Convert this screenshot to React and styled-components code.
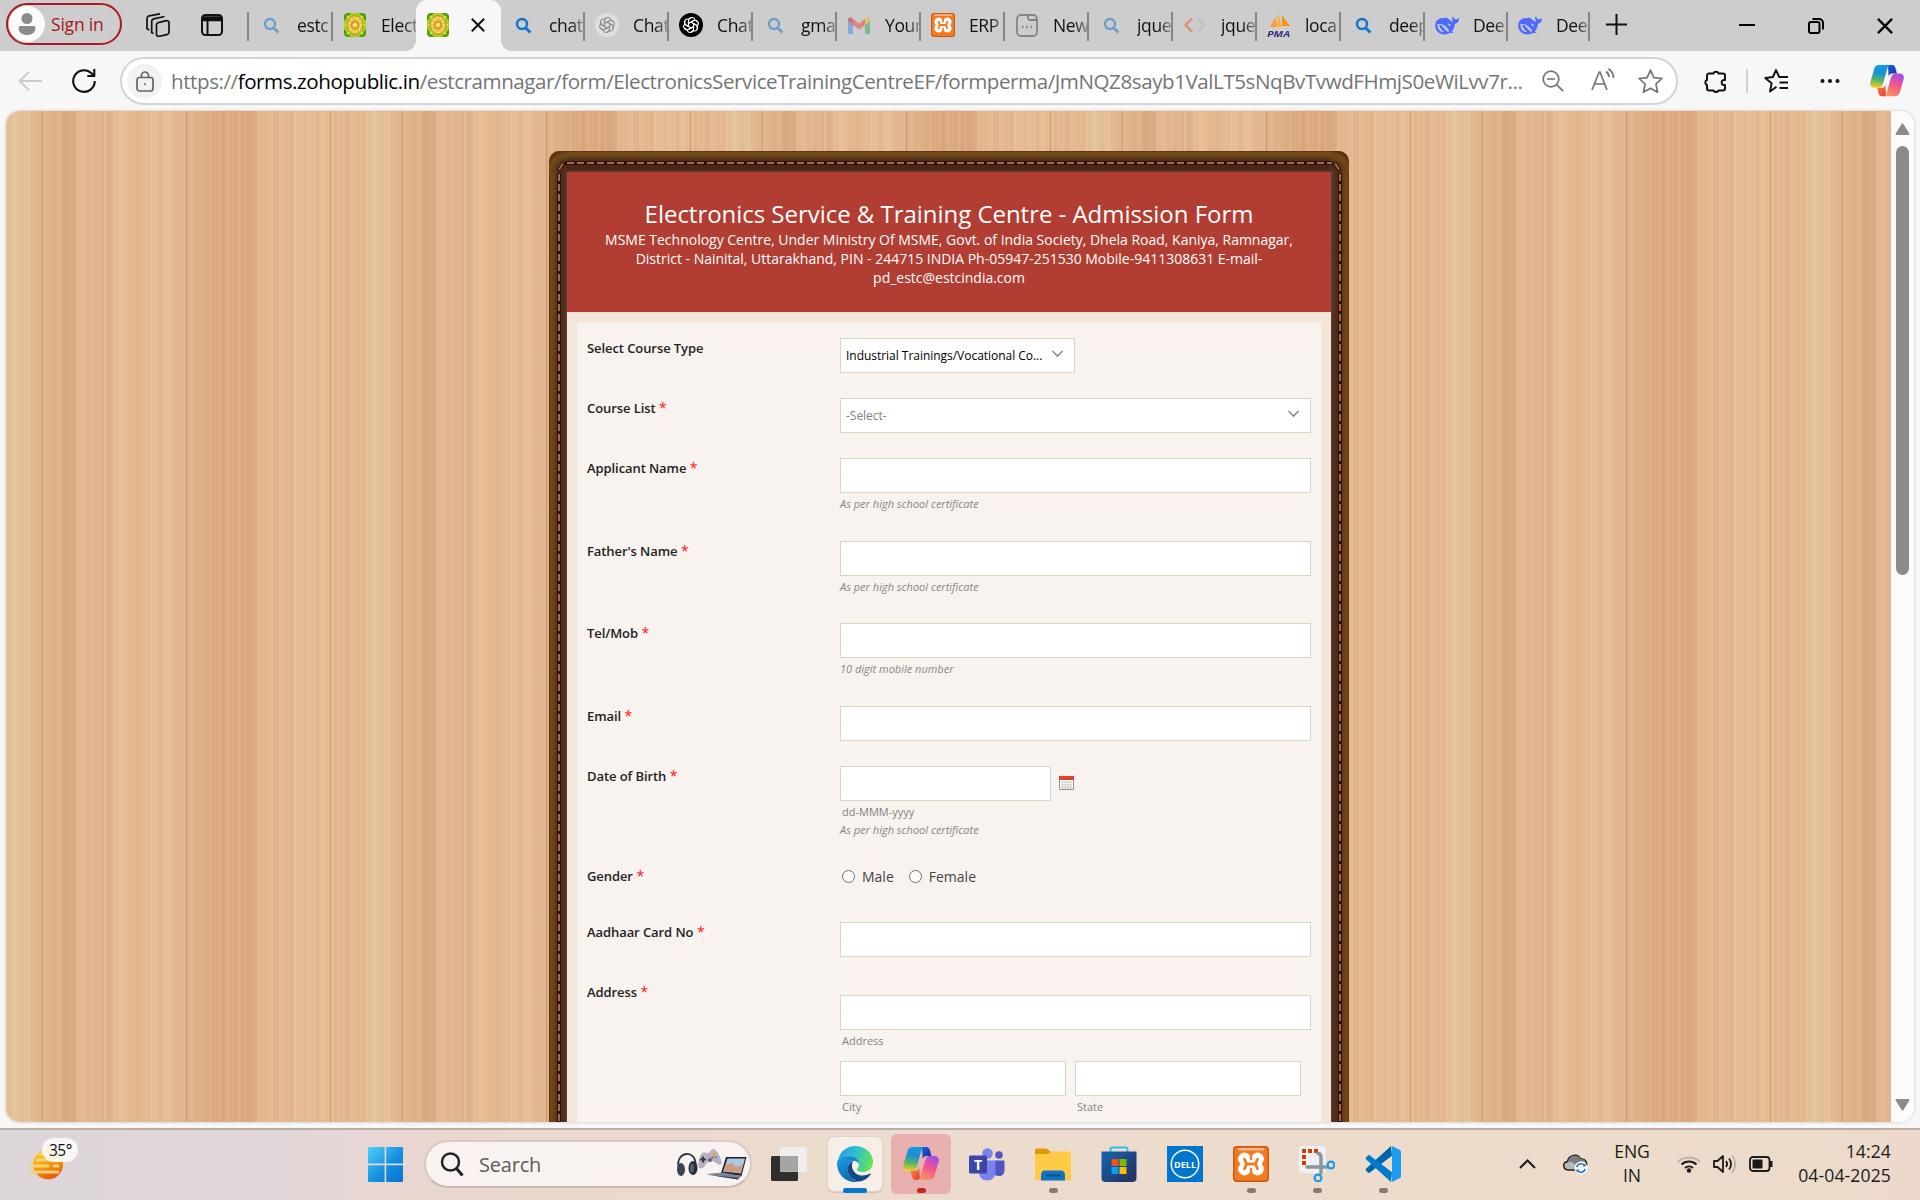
import React from "react";
import styled, { createGlobalStyle, css } from "styled-components";

const GlobalStyle = createGlobalStyle`
  * { box-sizing: border-box; }
  html, body { margin: 0; padding: 0; overflow: hidden; }
  body { font-family: "Open Sans", "Noto Sans", sans-serif; }
`;

/* ---------- wood texture: 360px wide tile made of ten 36px planks ---------- */
const planks = [
  ["#e4c49b", "#e4bf96", "#e0b68d"],
  ["#e1b68d", "#deaf87", "#ddab83"],
  ["#e4ba92", "#dfb48d", "#e1b48c"],
  ["#e5bc93", "#e3b88f", "#e0b88e"],
  ["#e4bc94", "#e5bc93", "#e3b991"],
  ["#e0b188", "#deae85", "#ddab82"],
  ["#dfaf87", "#dca983", "#deac84"],
  ["#e2b58c", "#e2b78f", "#e4b990"],
  ["#e3ba91", "#e4ba92", "#e3bb91"],
  ["#e1b68e", "#e3b890", "#e2b48b"],
];
const seams = ["#eacba0", "#d29a70", "#e8c298", "#ebc89e", "#eccba1", "#d0966e", "#d4996f", "#e8c59b", "#ecc9a0", "#d2976e"];

const woodStops = (() => {
  const stops = [];
  let seed = 11;
  const rnd = () => ((seed = (seed * 1103515245 + 12345) % 2147483648) / 2147483648);
  const rgb = (hex) => {
    const n = parseInt(hex.slice(1), 16);
    return [n >> 16, (n >> 8) & 255, n & 255];
  };
  const tones = planks.flat().map(rgb);
  const toneAt = (x) => {
    const f = (x / 12 - 0.5 + tones.length) % tones.length;
    const a = tones[Math.floor(f)];
    const b = tones[(Math.floor(f) + 1) % tones.length];
    return a.map((v, i) => v + (b[i] - v) * (f % 1));
  };
  planks.forEach((_, p) => {
    const x0 = p * 36;
    stops.push(`${seams[p]} ${x0}px ${x0 + 1}px`);
    let x = x0 + 1;
    while (x < x0 + 36) {
      const w = Math.min(1 + Math.floor(rnd() * 3), x0 + 36 - x);
      const d = (rnd() - 0.5) * 10;
      stops.push(`rgb(${toneAt(x).map((v) => Math.round(v + d)).join(",")}) ${x}px ${x + w}px`);
      x += w;
    }
  });
  return stops.join(",");
})();

/* ---------- shell ---------- */
const Screen = styled.div`
  width: 1920px; height: 1200px; overflow: hidden;
  display: grid; grid-template-rows: 51px 60px 1011px 6px 72px;
  background: #f7f7f7; color: #111;
`;

const TabStrip = styled.div`
  display: flex; align-items: center; background: #cdcdcd; height: 51px;
`;
const SignIn = styled.button`
  width: 116px; height: 42px; margin: -4px 0 0 6px; padding: 0 0 0 1px;
  display: flex; align-items: center; gap: 6px;
  background: transparent; border: 2px solid #aa1a1e; border-radius: 21px;
  color: #a4161a; font: 400 17.5px "Open Sans", sans-serif; letter-spacing: -0.2px; white-space: nowrap;
`;
const StripIcon = styled.span`
  display: flex; margin-left: ${(p) => p.$gap}px; flex: none; margin-top: ${(p) => p.$drop || 0}px;
`;
const Tab = styled.div`
  width: ${(p) => p.$w || 84}px; height: 29px; margin-top: 1px; flex: none;
  display: flex; align-items: center; padding-left: 10px; gap: 14px; overflow: hidden;
  border-right: ${(p) => (p.$bare ? "0" : "2px solid #868686")};
`;
const Favicon = styled.span`
  width: 24px; height: 24px; margin-top: -2px; flex: none; display: flex; align-items: center; justify-content: center;
  opacity: ${(p) => (p.$faded ? 0.5 : 1)};
`;
const TabTitle = styled.span`
  font-size: 17.5px; letter-spacing: -0.35px; line-height: 26px; white-space: nowrap; overflow: hidden; flex: 1;
  margin-top: -3px;
  mask-image: linear-gradient(to right, #000 62%, rgba(0, 0, 0, 0.35) 100%);
`;
const ActiveTab = styled.div`
  width: 85px; height: 51px; flex: none; background: #f7f7f7; border-radius: 11px 11px 0 0;
  display: flex; align-items: center; padding: 0 0 2px 10px; gap: 21px; position: relative;
  &::before, &::after {
    content: ""; position: absolute; bottom: 0; width: 10px; height: 10px;
  }
  &::before { left: -10px; background: radial-gradient(circle at 0 0, transparent 9.5px, #f7f7f7 10px); }
  &::after { right: -10px; background: radial-gradient(circle at 100% 0, transparent 9.5px, #f7f7f7 10px); }
`;

const Toolbar = styled.div`
  display: flex; align-items: center; height: 60px; background: #f7f7f7;
`;
const ToolIcon = styled.span`
  display: flex; flex: none; margin-left: ${(p) => p.$gap}px; margin-top: ${(p) => p.$drop || 0}px;
`;
const AddressBar = styled.div`
  width: 1558px; height: 48px; margin-left: 24px; flex: none; background: #fff;
  border: 2px solid #d4d4d4; border-radius: 24px; display: flex; align-items: center; padding-left: 5px;
`;
const LockBadge = styled.span`
  width: 35px; height: 35px; border-radius: 50%; background: #f2f2f2; flex: none;
  display: flex; align-items: center; justify-content: center;
`;
const Url = styled.span`
  width: 1353px; margin: 0 0 0 9px; font-size: 20.6px; line-height: 30px; letter-spacing: -0.445px; color: #757575;
  white-space: nowrap; flex: none;
  b { font-weight: 400; color: #000; }
`;
const Rule = styled.span`
  width: 2px; height: 24px; background: #d2d2d2; margin-left: 18px; flex: none;
`;

/* ---------- page ---------- */
const Viewport = styled.div`
  margin: 0 6px; height: 1011px; display: flex; overflow: hidden; border-radius: 14px; background: #fcfcfc;
  box-shadow: 0 0 2px 1px #d8d8d8;
`;
const Page = styled.main`
  width: 1885px; height: 1011px; overflow: hidden; padding: 40px 0 0 543px;
  background: linear-gradient(to right, ${woodStops}) 0 0 / 360px 100% repeat-x;
`;
const ScrollTrack = styled.div`
  width: 23px; display: flex; flex-direction: column; align-items: center; justify-content: space-between;
  padding: 12px 0 11px; background: #fcfcfc;
`;
const Thumb = styled.div`
  width: 13px; height: 429px; border-radius: 7px; background: #8b8b8b; margin: 11px 0 auto;
`;

const stitch = "#a5694e";
const hole = "#2a130c";
const hide = "#5b340f 0, #714917 2px, #6a4116 5px, #4e2819 10px, #54301e 16px, #57453c 18px";
const hideCorner = "#54301e 0, #54301e 2px, #4e2819 8px, #6a4116 14px, #714917 18px, #5b340f 21px";
const Leather = styled.section`
  position: relative; width: 800px; height: 1000px; padding: 21px 18px 0; border-radius: 10px 10px 0 0;
  background:
    repeating-linear-gradient(to right, ${hole} 0 1px, ${stitch} 1px 8px, ${hole} 8px 10px) 17px 11px / 766px 2px no-repeat,
    linear-gradient(${hole}, ${hole}) 16px 10px / 768px 4px no-repeat,
    repeating-linear-gradient(to bottom, ${stitch} 0 7px, ${hole} 7px 10px) 9px 23px / 2px 100% no-repeat,
    linear-gradient(${hole}, ${hole}) 8px 22px / 4px 100% no-repeat,
    repeating-linear-gradient(to bottom, ${stitch} 0 7px, ${hole} 7px 10px) 790px 23px / 2px 100% no-repeat,
    linear-gradient(${hole}, ${hole}) 789px 22px / 4px 100% no-repeat,
    radial-gradient(circle at 100% 100%, ${hideCorner}) 0 0 / 18px 21px no-repeat,
    radial-gradient(circle at 0 100%, ${hideCorner}) 782px 0 / 18px 21px no-repeat,
    linear-gradient(to right, ${hide}) 0 21px / 18px 100% no-repeat,
    linear-gradient(to left, ${hide}) 782px 21px / 18px 100% no-repeat,
    linear-gradient(to bottom, #5b340f 0, #7a4f19 2px, #643d18 6px, #4b2419 11px, #4f2819 19px, #57453c 21px);
  &::before, &::after {
    content: ""; position: absolute; top: 12px; width: 2px; height: 7px; background: ${stitch};
    box-shadow: 0 0 1px 1px ${hole};
  }
  &::before { left: 11px; transform: rotate(33deg); }
  &::after { right: 11px; transform: rotate(-33deg); }
`;
const FormHead = styled.header`
  height: 140px; background: #b23d32; color: #fff; text-align: center; padding: 25px 0 0;
`;
const FormTitle = styled.h1`
  margin: 0; font-size: 24px; font-weight: 400; line-height: 33px; white-space: nowrap; letter-spacing: -0.03px;
`;
const FormSub = styled.p`
  margin: 0; font-size: 14px; line-height: 19px; white-space: nowrap; letter-spacing: -0.01px;
`;
const FormBody = styled.div`
  height: 850px; background: #f4e6d9; border-top: 1px solid #dcdcdc; padding: 10px 10px 0;
`;
const Sheet = styled.div`
  background: #f8f3ee; height: 840px; padding: 15px 10px 0;
`;
const Row = styled.div`
  display: flex; height: ${(p) => p.$h}px;
`;
const Label = styled.label`
  width: 253px; flex: none; font-size: 13px; font-weight: 600; line-height: 20px; color: #222; letter-spacing: -0.08px;
  i { font-style: normal; font-weight: 400; color: #f11; font-size: 14px; }
`;
const Field = styled.div`
  display: flex; flex-direction: column; align-items: flex-start; padding-top: ${(p) => p.$drop || 0}px;
`;
const boxed = css`
  height: 35px; width: ${(p) => p.$w || 471}px; background: #fff; border: 1px solid #ddd4c4; flex: none;
`;
const TextInput = styled.input`
  ${boxed} padding: 0 6px; outline: 0; border-radius: 0; display: block;
`;
const SelectBox = styled.div`
  ${boxed} display: flex; align-items: center; justify-content: space-between; padding: 0 10px 0 5px;
  font-size: 12px; letter-spacing: -0.03px; color: ${(p) => (p.$muted ? "#808080" : "#000")}; white-space: nowrap;
  svg { margin-top: -4px; }
`;
const Hint = styled.span`
  font-size: 11px; font-style: italic; line-height: 18px; color: #8b8782; margin-top: ${(p) => (p.$tight ? 0 : 2)}px;
`;
const SubLabel = styled.span`
  font-size: 11px; line-height: 18px; color: #86827e; padding-left: 2px; margin-top: 2px;
`;
const Inline = styled.div`
  display: flex; align-items: ${(p) => p.$align || "center"}; gap: ${(p) => p.$gap}px;
  margin-top: ${(p) => p.$top || 0}px; padding-left: ${(p) => p.$indent || 0}px;
  svg { margin-top: -1px; }
`;
const Choice = styled.label`
  display: flex; align-items: center; gap: 7px; font-size: 14px; line-height: 22px; color: #444;
`;
const Dot = styled.span`
  width: 13px; height: 13px; margin-top: -1px; border: 1px solid #6f6f6f; border-radius: 50%; background: #fff;
`;

/* ---------- taskbar ---------- */
const Taskbar = styled.footer`
  height: 72px; border-top: 2px solid #b9ada5; display: flex; align-items: center; padding: 0 0 2px 30px;
  background: linear-gradient(to right, #dcd6d9 0, #e0d6d7 270px, #e9d6d3 390px, #ead9cd 520px, #ecdccd 900px, #eddccc 1700px, #ecd9cb 1920px);
`;
const Weather = styled.div`
  width: 50px; height: 44px; position: relative; flex: none; margin-top: -8px;
  svg { position: absolute; left: 0; top: 11px; }
`;
const Temp = styled.span`
  position: absolute; left: 12px; top: 0; width: 36px; height: 24px; border-radius: 12px;
  background: rgba(252, 250, 250, 0.9); font-size: 15.5px; line-height: 24px; text-align: center; letter-spacing: -0.4px; padding-left: 1px;
`;
const SearchPill = styled.div`
  width: 328px; height: 48px; margin-left: 21px; flex: none; border-radius: 24px; background: #f8f3f0;
  border: 2px solid #d8cac4; border-bottom-color: #c8b9b1; display: flex; align-items: center; padding: 0 3px 0 14px;
  font-size: 20px; color: #5d5b5a; letter-spacing: -0.2px;
  span { margin: 0 auto 0 15px; }
`;
const Apps = styled.div`
  display: flex; margin-left: 4px; flex: none;
`;
const AppSlot = styled.div`
  width: 66px; height: 68px; display: flex; flex-direction: column; align-items: center; justify-content: center;
  position: relative;
`;
const Tile = styled.div`
  width: ${(p) => p.$s}px; height: ${(p) => p.$s}px; border-radius: 6px; display: flex; align-items: center; justify-content: center;
  background: ${(p) => p.$bg || "transparent"}; box-shadow: ${(p) => (p.$edge ? "0 0 0 1px #e2d5ca, 0 1px 1px 1px #cdbfb4" : "none")};
`;
const Running = styled.span`
  position: absolute; bottom: 5px; height: 5px; border-radius: 3px;
  width: ${(p) => p.$w || 9}px; background: ${(p) => p.$c || "#857b72"};
`;
const Tray = styled.div`
  display: flex; align-items: center; margin-left: auto; margin-right: 29px; color: #1b1b1b;
`;
const TrayText = styled.div`
  font-size: 17.6px; line-height: 24px; letter-spacing: ${(p) => p.$track ?? -0.1}px; white-space: nowrap; margin-top: -2px;
  text-align: ${(p) => p.$align}; width: ${(p) => p.$w}px; margin-left: ${(p) => p.$gap}px; flex: none;
`;

/* ---------- icons ---------- */
const Svg = ({ w = 24, h, vb, children, ...rest }) => (
  <svg width={w} height={h || w} viewBox={vb || `0 0 ${w} ${h || w}`} fill="none" {...rest}>{children}</svg>
);
const Magnifier = () => (
  <Svg w={17} vb="0 0 17 17"><circle cx="7" cy="7" r="5" stroke="#1173cc" strokeWidth="2.4" /><path d="M10.8 11l4.6 4.6" stroke="#1173cc" strokeWidth="2.8" /></Svg>
);
const Emblem = () => (
  <Svg w={24}>
    <rect x="1" y="0" width="22" height="24" rx="5" fill="#a9d01f" />
    <path d="M1 8V4a4 4 0 014-4h3zM23 8V4a4 4 0 00-4-4h-3zM1 16v4a4 4 0 004 4h3zM23 16v4a4 4 0 01-4 4h-3z" fill="#4f9a16" />
    <path d="M4 3l3 3M20 3l-3 3M4 21l3-3M20 21l-3-3M2 12h3M19 12h3" stroke="#d3ea3c" strokeWidth="2" />
    <ellipse cx="12" cy="12" rx="8" ry="9.500" fill="#e3bb3e" stroke="#b89427" />
    <ellipse cx="12" cy="12" rx="5.800" ry="7" stroke="#f7df6c" strokeWidth="2" strokeDasharray="2.200 1.300" />
    <circle cx="12" cy="12" r="4.200" fill="#d79a34" /><circle cx="12" cy="12" r="2.800" fill="#f8e35e" strokeDasharray="1.500 1" stroke="#bc7a14" />
  </Svg>
);
const Knot = ({ color, bg }) => (
  <Svg w={24}>
    <circle cx="12" cy="12" r="12" fill={bg} />
    <g stroke={color} strokeWidth="1.1">
      {[0, 60, 120, 180, 240, 300].map((a) => (
        <path key={a} transform={`rotate(${a} 12 12)`} d="M9.500 13.400V8c0-4.300 5.600-4.600 6.300-1M9.600 10.400l4.600-2.700c1.500-.9 3.300-.2 4 1.200" />
      ))}
    </g>
  </Svg>
);
const Gmail = () => (
  <Svg w={22} h={17}><path d="M0 3v12.500A1.500 1.500 0 001.500 17H5V7z" fill="#4285f4" /><path d="M22 3v12.500a1.500 1.500 0 01-1.500 1.500H17V7z" fill="#34a853" /><path d="M17 2v6l5-4V2.500C22 .5 19.600-.6 18 .9z" fill="#fbbc04" /><path d="M5 8V2l6 4.600L17 2v6l-6 4.500z" fill="#ea4335" /><path d="M0 2.500V4l5 4V2L4 .9C2.400-.6 0 .5 0 2.500z" fill="#c5221f" /></Svg>
);
const Xampp = ({ s = 24 }) => (
  <Svg w={s} vb="0 0 36 36">
    <rect width="36" height="36" rx="4" fill="#c75a13" /><rect x="1.500" y="1.500" width="33" height="33" rx="3" fill="#f47a20" />
    <path d="M4 2h28l-2 2.500H6z" fill="#fab88a" />
    <g fill="#fff">
      <circle cx="11.500" cy="13" r="6.400" /><circle cx="24.500" cy="13" r="6.400" />
      <circle cx="11.500" cy="23" r="6.400" /><circle cx="24.500" cy="23" r="6.400" />
      <path d="M11 12.500h14v11H11z" />
    </g>
    <path d="M11.500 13.200l2 4.800-2 4.800M24.500 13.200l-2 4.800 2 4.800M13.500 18h9" stroke="#f47a20" strokeWidth="2.800" strokeLinecap="round" strokeLinejoin="round" />
    <path d="M18 8v5M18 28v-5" stroke="#f47a20" strokeWidth="2.400" strokeLinecap="round" />
  </Svg>
);
const NewPage = () => (
  <Svg w={22} h={23} stroke="#3d3d3d" strokeWidth="1.800"><rect x="1" y="1" width="20" height="21" rx="4" /><path d="M12 1v3a2 2 0 002 2h7" /><path d="M6 13h1.500M10.300 13h1.500M14.500 13H16" strokeWidth="2.400" /></Svg>
);
const Angles = () => (
  <Svg w={24} h={16}><path d="M9 1.500L2.500 8 9 14.500" stroke="#ef5b32" strokeWidth="2.600" /><path d="M15 1.500L21.500 8 15 14.500" stroke="#bababa" strokeWidth="2.600" /></Svg>
);
const Pma = () => (
  <Svg w={24} h={24}><path d="M3 14L8.500 4l1.500 10z" fill="#f9a12e" /><path d="M10 14L11 0l4 14z" fill="#fbb040" /><path d="M15 13V2l8 11z" fill="#f7941d" /><text x="0" y="23.500" textLength="23" lengthAdjust="spacingAndGlyphs" fontFamily="Open Sans, sans-serif" fontSize="9.500" fontWeight="700" fontStyle="italic" fill="#2d2e75" stroke="#fff" strokeWidth=".4" paintOrder="stroke">PMA</text></Svg>
);
const Whale = () => (
  <Svg w={25} h={19} vb="0 0 25 19"><path d="M24.700 1.800c-.3-.1-.5.100-.8.300-.8 1-2 1.200-3 .8-1.200-.5-1.600-1.400-1.900-2.500-.1-.4-.5-.4-.7 0-.5 1.200-.7 2.900.3 4.300-.5.700-.9.900-1.600.4C14.800 3.300 13.200 1.500 11 1.200c-.8-.1-.9.4-.3.800C5.500.6.200 3.600.2 9.500c0 5.400 4.300 9.300 9.600 9.300 2.500 0 4.300-.6 5.900-1.800.9.400 2.700.5 3.300.1.500-.3.100-.7-.4-.8l-1.200-.5c2.300-2.300 3-4.700 3.300-8 2.600-.2 4.400-2.500 4.300-5.500 0-.3-.1-.4-.3-.5zM13 15.800c-3.600-2.600-5.600-7.400-8.300-7.200-.6.1-.4.7-.1 1.400.7 1.700 1.700 3.800 3.600 5 1.200.8 1.500 1.300-.1 1.200C4.900 16 2.400 12.600 2.500 8.200 8 7 11.700 10.500 14.200 14c.8 1 .1 2.800-1.200 1.800zm3.300-5.600c-1.300.2-2.500-.8-2.500-2 0-.6.5-.9 1-.6.7.3 1.500 1.200 1.700 2.200z" fill="#4d6bfe" fillRule="evenodd" /></Svg>
);
const Cross = ({ s = 14, c = "#111", sw = 2 }) => <Svg w={s} vb="0 0 14 14" stroke={c} strokeWidth={sw}><path d="M.8.8l12.400 12.400M13.200.8L.8 13.200" /></Svg>;
const Caret = () => <Svg w={13} h={8} stroke="#8a8a8a" strokeWidth="1.600"><path d="M1.500 1l5 5 5-5" /></Svg>;
const Calendar = () => (
  <Svg w={15} h={14}><path d="M.5.500h14v13H.5z" fill="#fff" stroke="#8f9499" /><path d="M0 0h15v4H0z" fill="#e0432a" /><path d="M2.500 5.500h10v7h-10z" fill="#c3c3c3" /><path d="M2.500 7.500h10M2.500 10h10M5 5.500v7M7.500 5.500v7M10 5.500v7" stroke="#fff" strokeWidth=".8" /></Svg>
);

const Copilot = ({ s = 36 }) => (
  <Svg w={s} h={s * 0.92} vb="0 0 36 33">
    <defs>
      <linearGradient id="cpA" x1="10" y1="0" x2="6" y2="24" gradientUnits="userSpaceOnUse"><stop stopColor="#1597e8" /><stop offset=".35" stopColor="#1a8fd6" /><stop offset=".65" stopColor="#53b567" /><stop offset="1" stopColor="#f5cf1e" /></linearGradient>
      <linearGradient id="cpB" x1="30" y1="9" x2="18" y2="33" gradientUnits="userSpaceOnUse"><stop stopColor="#a04cf0" /><stop offset=".45" stopColor="#f0568c" /><stop offset="1" stopColor="#fd9a5c" /></linearGradient>
      <linearGradient id="cpC" x1="18" y1="0" x2="28" y2="9" gradientUnits="userSpaceOnUse"><stop stopColor="#1a62dc" /><stop offset="1" stopColor="#1537a8" /></linearGradient>
      <linearGradient id="cpD" x1="9" y1="24" x2="16" y2="33" gradientUnits="userSpaceOnUse"><stop stopColor="#fb7a26" /><stop offset="1" stopColor="#e63c50" /></linearGradient>
    </defs>
    <path d="M19 0h4.500c2 0 2.800 1.300 3.400 3.200L28.500 9H24c-2.500 0-3.600 1-4.300 3z" fill="url(#cpC)" />
    <path d="M17 33h-4.500c-2 0-2.800-1.300-3.400-3.200L7.500 24H12c2.500 0 3.600-1 4.300-3z" fill="url(#cpD)" />
    <path d="M10 0h12c-2 .3-3 1.500-3.600 3.500L14 19c-.9 3.200-2.300 5-5.500 5H4.500C1 24-.5 21.500.4 18L4.500 4C5.300 1.300 7 0 10 0z" fill="url(#cpA)" />
    <path d="M26 33H14c2-.3 3-1.500 3.600-3.500L22 14c.9-3.200 2.300-5 5.500-5h4c3.500 0 5 2.500 4.100 6l-4.100 14c-.8 2.700-2.500 4-5.500 4z" fill="url(#cpB)" />
  </Svg>
);
const Edge = () => (
  <Svg w={36}>
    <defs>
      <linearGradient id="eA" x1="2" y1="8" x2="36" y2="18" gradientUnits="userSpaceOnUse"><stop stopColor="#279fdf" /><stop offset=".45" stopColor="#2bc3d2" /><stop offset="1" stopColor="#6fe34b" /></linearGradient>
      <linearGradient id="eB" x1="2" y1="12" x2="22" y2="34" gradientUnits="userSpaceOnUse"><stop stopColor="#1b9de2" /><stop offset="1" stopColor="#0c59a4" /></linearGradient>
    </defs>
    <path d="M1 14C3 5.500 10 0 18 0c10 0 18 7 18 15.500 0 7-4.500 10.500-10 10.500-3.500 0-6-1.300-6-2.500 0-.8 2-1.800 2-5.500 0-4-5-8.500-11-8.500C7 9.500 3 11 1 14z" fill="url(#eA)" />
    <path d="M18 36C8 36 0 28 0 18 0 12.500 5 9.500 11 9.500c6 0 11 4 11 8.500-2-4-8-5-10.500 1-2.500 6.500 1 15 10 16.600A17 17 0 0118 36z" fill="url(#eB)" />
    <path d="M22 35.500c-9-1.500-13.500-9.500-10.500-16.500 1-2.300 3-3.700 5-4-3.500 3.500-1 14.500 9 14.500 3 0 5.500-1 7.500-2 .7-.3 1 .2.7.8-2.200 3.700-6.700 6.700-11.700 7.200z" fill="#114a8b" />
  </Svg>
);
const TaskView = () => (
  <Svg w={36} h={34}><rect y="9" width="27" height="25" rx="1.500" fill="#2f2f2e" /><rect x="9" y="0" width="27" height="25" rx="1.500" fill="#eeeeee" /><path d="M9 9h18v15.800H9z" fill="#a5a5a4" /></Svg>
);
const Teams = () => (
  <Svg w={36} h={33}><circle cx="30" cy="7" r="3.800" fill="#4f56c0" /><path d="M25 12.500h9.500c.8 0 1 .5 1 1V22c0 4-2.500 6-5.500 6s-5-1.500-5-1.500z" fill="#4f56c0" /><circle cx="18.500" cy="5.500" r="5.300" fill="#7b83eb" /><path d="M10 12.500h16.500V24c0 5-3.500 8.500-8.300 8.500S10 29 10 24z" fill="#7b83eb" /><rect y="7.500" width="18" height="18" rx="1.500" fill="#3d45a8" /><text x="9" y="21.500" textAnchor="middle" fontFamily="Open Sans, sans-serif" fontWeight="700" fontSize="14" fill="#fff">T</text></Svg>
);
const Folder = () => (
  <Svg w={36} h={33}><path d="M0 2a1.500 1.500 0 011.500-1.500h10L16 4h19v5H0z" fill="#dd9a05" /><path d="M0 6h13l3-2.500h18.500A1.500 1.500 0 0136 5v26a1.500 1.500 0 01-1.500 1.500h-33A1.500 1.500 0 010 31z" fill="#fdcb45" /><path d="M6 32.500V27c0-2.500 1.500-4.500 4-4.500h16c2.500 0 4 2 4 4.500v5.500z" fill="#1273c6" /><path d="M11 27.500h14" stroke="#0b4f94" strokeWidth="2" /></Svg>
);
const Store = () => (
  <Svg w={36} h={36}><defs><linearGradient id="st" x1="0" y1="5" x2="30" y2="36" gradientUnits="userSpaceOnUse"><stop stopColor="#0f68b4" /><stop offset="1" stopColor="#28305f" /></linearGradient></defs><path d="M9.500 8V3c0-.9.6-1.500 1.500-1.500h14c.9 0 1.500.6 1.500 1.500v5" stroke="#2dc0ea" strokeWidth="2" /><path d="M.5 5.500h35V32a4 4 0 01-4 4h-27a4 4 0 01-4-4z" fill="url(#st)" /><path d="M10.500 13h7v7h-7z" fill="#f25022" /><path d="M18.500 13h7v7h-7z" fill="#7fba00" /><path d="M10.500 21h7v7h-7z" fill="#00a4ef" /><path d="M18.500 21h7v7h-7z" fill="#ffb900" /></Svg>
);
const Dell = () => (
  <Svg w={36}><path d="M0 0h36v36H0z" fill="#0076ce" /><circle cx="18" cy="18" r="13.700" stroke="#fff" strokeWidth="1.500" /><text x="18" y="21.500" textAnchor="middle" textLength="22" lengthAdjust="spacingAndGlyphs" fontFamily="Open Sans, sans-serif" fontWeight="700" fontSize="9.500" fill="#fff">DELL</text></Svg>
);
const Snip = () => (
  <Svg w={36}><rect width="27" height="27" rx="3" fill="#eef0f4" /><path d="M3 5h17M5 9v11" stroke="#d83b01" strokeWidth="4" strokeDasharray="4 2" /><path d="M19 7.500q3 0 3 4V27M8 21h20" stroke="#8c949c" strokeWidth="3.400" strokeLinecap="round" /><circle cx="32" cy="19" r="3.400" stroke="#1e9be6" strokeWidth="2.200" /><circle cx="19" cy="32" r="3.400" stroke="#1e9be6" strokeWidth="2.200" /></Svg>
);
const VsCode = () => (
  <Svg w={36}><path d="M26 0L1.200 22.600a1.500 1.500 0 000 2.200L3 26.500c.6.5 1.300.5 1.900.1L27 9.800z" fill="#0065a9" /><path d="M26 36L1.200 13.400a1.500 1.500 0 010-2.200L3 9.500c.6-.5 1.300-.5 1.900-.1L27 26.200z" fill="#007acc" /><path d="M26.500 36a2 2 0 01-1.500-.7c.8.8 2 .2 2-.9V1.600c0-1.100-1.200-1.700-2-.9a2 2 0 012.400-.4l7 3.400c1 .5 1.600 1.400 1.600 2.400v23.800c0 1-.6 1.900-1.600 2.400l-7 3.400z" fill="#1f9cf0" /></Svg>
);
const WinLogo = () => (
  <Svg w={35} h={35}><defs><linearGradient id="wl" x1="0" y1="0" x2="35" y2="35" gradientUnits="userSpaceOnUse"><stop stopColor="#4fd0fb" /><stop offset=".55" stopColor="#1590e0" /><stop offset="1" stopColor="#0672cf" /></linearGradient></defs><path d="M1 0h15.600v16.600H0V1a1 1 0 011-1zM18.200 0H34a1 1 0 011 1v15.600H18.200zM0 18.200h16.600V35H1a1 1 0 01-1-1zM18.200 18.200H35V34a1 1 0 01-1 1H18.200z" fill="url(#wl)" /></Svg>
);
const SearchArt = () => (
  <Svg w={71} h={32}>
    <path d="M2.500 19C-.5 3 20.500 1 19.500 17" stroke="#2c3440" strokeWidth="1.800" /><ellipse cx="5" cy="21.500" rx="4" ry="6.500" fill="#39434f" /><ellipse cx="17" cy="20" rx="4.500" ry="7" fill="#242c38" /><ellipse cx="16" cy="20" rx="2" ry="4.500" fill="#526074" />
    <path d="M23 20c-2-1 0-14 4-15.500 2-.8 2.500 1 5 .5s2.500-3.500 5-4c4-.5 10 12 8.500 15-2 3-7-3.500-10-3-4 .5-6 4-7 5.500-1 1.300-3.500 2.500-5.500 1.500z" fill="#b9b1c4" /><path d="M27 8.500v6M24 11.500h6" stroke="#3b3848" strokeWidth="2" /><circle cx="38" cy="5.500" r="1.500" fill="#f4a62a" /><circle cx="40" cy="9" r="1.300" fill="#4a9de0" /><circle cx="36.500" cy="9.500" r="1.200" fill="#e0563f" /><circle cx="34" cy="12" r="2" fill="#625d70" />
    <path d="M50 9h20.500l-5 19L45 25z" fill="#1c2027" /><path d="M51.500 10.500H69l-4 15L47 23.500z" fill="#a9c8e2" /><path d="M49.500 17l6-2 4 4 7.500-2-2.500 8L47.500 23z" fill="#cf9a80" /><path d="M30 26l17-1.500L65.500 28l-3.500 3.500z" fill="#79859a" /><path d="M30 26.500l32 3.500v1.500z" fill="#2e3746" />
  </Svg>
);

/* ---------- content ---------- */
const icons = {
  bing: [<Magnifier key="i" />, false], bingOff: [<Magnifier key="i" />, true], emblem: [<Emblem key="i" />, false],
  gptOff: [<Knot key="i" color="#555" bg="#f2f2f2" />, true], gpt: [<Knot key="i" color="#fff" bg="#000" />, false],
  gmail: [<Gmail key="i" />, true], xampp: [<Xampp key="i" />, false], page: [<NewPage key="i" />, true],
  angles: [<Angles key="i" />, true], pma: [<Pma key="i" />, false], whale: [<Whale key="i" />, false],
};
const TabItem = ({ icon, title, w, bare }) => (
  <Tab $w={w} $bare={bare}>
    <Favicon $faded={icons[icon][1]}>{icons[icon][0]}</Favicon>
    <TabTitle>{title}</TabTitle>
  </Tab>
);
const tabsAfter = [
  ["bing", "chat"], ["gptOff", "Chat"], ["gpt", "Chat"], ["bingOff", "gma"], ["gmail", "Your"], ["xampp", "ERP"],
  ["page", "New"], ["bingOff", "jque"], ["angles", "jque"], ["pma", "loca"], ["bing", "deep"], ["whale", "Dee", 83], ["whale", "Dee", 82],
];

const Caption = ({ text, required = true }) => <Label>{text}{required && <i> *</i>}</Label>;

const apps = [
  [<TaskView key="a" />], [<Edge key="a" />, { s: 54, bg: "#f6eee7", edge: true, run: "#0078d4", w: 24 }],
  [<Copilot key="a" />, { s: 60, bg: "#e8b0ae", run: "#c42b1c" }], [<Teams key="a" />], [<Folder key="a" />, { run: "#857b72" }],
  [<Store key="a" />], [<Dell key="a" />], [<Xampp key="a" s={36} />, { run: "#857b72" }], [<Snip key="a" />, { run: "#857b72" }],
  [<VsCode key="a" />, { run: "#857b72" }],
];

export default function App() {
  return (
    <>
      <GlobalStyle />
      <Screen>
        <TabStrip>
          <SignIn>
            <Svg w={36}><circle cx="18" cy="18" r="18" fill="#fbfbfb" /><circle cx="18" cy="12.500" r="5.500" fill="#8b8b8b" /><path d="M9.500 22a2 2 0 012-2h13a2 2 0 012 2c0 4.500-4 7-8.500 7s-8.500-2.500-8.500-7z" fill="#8b8b8b" /></Svg>
            Sign in
          </SignIn>
          <StripIcon $gap={24} $drop={-2}>
            <Svg w={24} stroke="#111" strokeWidth="1.700" strokeLinejoin="round"><path d="M12 9.700l8.500-2a2 2 0 012.500 2v9.500a2.500 2.500 0 01-2 2.500L13 23.300a2 2 0 01-2.500-2v-9.600a2 2 0 011.500-2z" /><path d="M7.500 20.500l-1.800-.8V8.500c0-1.500 1-2.300 2-2.600L18.500 3.500M3.300 17L1 15.800V5.500c0-1.500.8-2.300 2-2.600L14 .9" /></Svg>
          </StripIcon>
          <StripIcon $gap={31} $drop={-2}>
            <Svg w={22} stroke="#111" strokeWidth="2"><rect x="1" y="1" width="20" height="20" rx="3.500" /><path d="M1 4h20M1 5.500h20" strokeWidth="3.500" /><path d="M6.500 6v15" /></Svg>
          </StripIcon>
          <Tab $w={26} aria-hidden="true" />
          <TabItem icon="bingOff" title="estc" w={84} />
          <TabItem icon="emblem" title="Elect" w={83} bare />
          <ActiveTab>
            <Emblem />
            <Cross s={14} />
          </ActiveTab>
          {tabsAfter.map(([icon, title, w], i) => <TabItem key={i} icon={icon} title={title} w={w} />)}
          <StripIcon $gap={16} $drop={-2}><Svg w={21} stroke="#111" strokeWidth="2"><path d="M10.500 0v21M0 10.500h21" /></Svg></StripIcon>
          <StripIcon $gap={112} $drop={-1}><Svg w={16} stroke="#000" strokeWidth="2"><path d="M0 8h16" /></Svg></StripIcon>
          <StripIcon $gap={53}><Svg w={16} stroke="#000" strokeWidth="2"><rect x="1" y="4" width="10.500" height="11" rx="2" /><path d="M4.500 1h6.500a4 4 0 014 4v6.500" /></Svg></StripIcon>
          <StripIcon $gap={53}><Cross s={16} c="#000" /></StripIcon>
        </TabStrip>

        <Toolbar>
          <ToolIcon $gap={18}><Svg w={24} h={20} stroke="#cbcbcb" strokeWidth="1.800"><path d="M24 10H1.500M11 .8L1.500 10l9.500 9.200" /></Svg></ToolIcon>
          <ToolIcon $gap={30}><Svg w={24} stroke="#111" strokeWidth="2.100"><path d="M22.800 12A10.800 10.800 0 1119.500 4.300l2 2.200M22.300 0v7h-7" /></Svg></ToolIcon>
          <AddressBar>
            <LockBadge><Svg w={18} h={21} stroke="#666" strokeWidth="1.700"><rect x="1" y="6.500" width="16" height="13.500" rx="2.500" /><path d="M5.500 6.500V4.500a3.500 3.500 0 017 0v2" /><circle cx="9" cy="13.200" r="1" fill="#666" stroke="none" /></Svg></LockBadge>
            <Url>https://<b>forms.zohopublic.in</b>/estcramnagar/form/ElectronicsServiceTrainingCentreEF/formperma/JmNQZ8sayb1ValLT5sNqBvTvwdFHmjS0eWiLvv7r...</Url>
            <ToolIcon $gap={18}><Svg w={22} stroke="#737373" strokeWidth="1.700"><circle cx="9" cy="9" r="7.800" /><path d="M14.800 14.800l6.400 6.400M5 9h8" /></Svg></ToolIcon>
            <ToolIcon $gap={27} $drop={-2}><Svg w={24} stroke="#737373" strokeWidth="1.700"><path d="M1 22L8.200 4h.8l7 18M3.600 16h10M15 3.500c2 1.300 3 3 3 5.500M17.500.8C20.800 3 22.500 6 22.500 10" /></Svg></ToolIcon>
            <ToolIcon $gap={23} $drop={1}><Svg w={25} h={25} vb="0 0 24 24" stroke="#737373" strokeWidth="1.600" strokeLinejoin="round"><path d="M12 1l3.200 7.300 7.800.8-5.800 5.300 1.600 7.900L12 18.400l-6.800 3.900 1.600-7.900L1 9.100l7.800-.8z" /></Svg></ToolIcon>
          </AddressBar>
          <ToolIcon $gap={26}><Svg w={24} stroke="#111" strokeWidth="2" strokeLinejoin="round"><path d="M5 4.500h4.300a3 3 0 015.400 0H19a2 2 0 012 2V11h-1.500a2.600 2.600 0 000 5H21v3.500a2 2 0 01-2 2h-4.500a2.800 2.800 0 01-5 0H5a2 2 0 01-2-2V16a2.700 2.700 0 010-5V6.500a2 2 0 012-2z" /></Svg></ToolIcon>
          <Rule />
          <ToolIcon $gap={16}><Svg w={25} stroke="#111" strokeWidth="1.900" strokeLinejoin="round"><path d="M12.500 17.700L6 22.500l1.600-8.200L1.200 9l7.700-1L12 1l3.200 7H24M15.500 13.500H24M15.500 19H24" /></Svg></ToolIcon>
          <ToolIcon $gap={31}><Svg w={20} h={6}><circle cx="2.500" cy="3" r="2" fill="#111" /><circle cx="10" cy="3" r="2" fill="#111" /><circle cx="17.500" cy="3" r="2" fill="#111" /></Svg></ToolIcon>
          <ToolIcon $gap={30}><Copilot s={34} /></ToolIcon>
        </Toolbar>

        <Viewport>
          <Page>
            <Leather>
              <FormHead>
                <FormTitle>Electronics Service &amp; Training Centre - Admission Form</FormTitle>
                <FormSub>
                  MSME Technology Centre, Under Ministry Of MSME, Govt. of India Society, Dhela Road, Kaniya, Ramnagar,<br />
                  District - Nainital, Uttarakhand, PIN - 244715 INDIA Ph-05947-251530 Mobile-9411308631 E-mail-<br />
                  pd_estc@estcindia.com
                </FormSub>
              </FormHead>
              <FormBody>
                <Sheet>
                  <Row $h={60}><Caption text="Select Course Type" required={false} /><Field><SelectBox $w={235}>Industrial Trainings/Vocational Co...<Caret /></SelectBox></Field></Row>
                  <Row $h={60}><Caption text="Course List" /><Field><SelectBox $muted>-Select-<Caret /></SelectBox></Field></Row>
                  <Row $h={83}><Caption text="Applicant Name" /><Field><TextInput /><Hint>As per high school certificate</Hint></Field></Row>
                  <Row $h={82}><Caption text="Father's Name" /><Field><TextInput /><Hint>As per high school certificate</Hint></Field></Row>
                  <Row $h={83}><Caption text="Tel/Mob" /><Field><TextInput /><Hint>10 digit mobile number</Hint></Field></Row>
                  <Row $h={60}><Caption text="Email" /><Field><TextInput /></Field></Row>
                  <Row $h={100}>
                    <Caption text="Date of Birth" />
                    <Field>
                      <Inline $gap={8}><TextInput $w={211} /><Calendar /></Inline>
                      <SubLabel>dd-MMM-yyyy</SubLabel>
                      <Hint $tight>As per high school certificate</Hint>
                    </Field>
                  </Row>
                  <Row $h={56}>
                    <Caption text="Gender" />
                    <Field><Inline $gap={15} $indent={2}><Choice><Dot />Male</Choice><Choice><Dot />Female</Choice></Inline></Field>
                  </Row>
                  <Row $h={60}><Caption text="Aadhaar Card No" /><Field><TextInput /></Field></Row>
                  <Row $h={150}>
                    <Caption text="Address" />
                    <Field $drop={13}>
                      <TextInput /><SubLabel>Address</SubLabel>
                      <Inline $gap={9} $top={11} $align="flex-start">
                        <Field><TextInput $w={226} /><SubLabel>City</SubLabel></Field>
                        <Field><TextInput $w={226} /><SubLabel>State</SubLabel></Field>
                      </Inline>
                    </Field>
                  </Row>
                </Sheet>
              </FormBody>
            </Leather>
          </Page>
          <ScrollTrack>
            <Svg w={15} h={12}><path d="M7.500 1.500l6 9.500h-12z" fill="#8b8b8b" stroke="#8b8b8b" strokeWidth="2" strokeLinejoin="round" /></Svg>
            <Thumb />
            <Svg w={15} h={12}><path d="M7.500 10.500l6-9.500h-12z" fill="#8b8b8b" stroke="#8b8b8b" strokeWidth="2" strokeLinejoin="round" /></Svg>
          </ScrollTrack>
        </Viewport>
        <div />

        <Taskbar>
          <Weather>
            <Svg w={33} h={31}><defs><linearGradient id="sun" x1="8" y1="0" x2="22" y2="31" gradientUnits="userSpaceOnUse"><stop stopColor="#fddb14" /><stop offset=".6" stopColor="#f78f0c" /><stop offset="1" stopColor="#e4520c" /></linearGradient></defs><circle cx="18" cy="15.500" r="15" fill="url(#sun)" /><path d="M8 5h14M7 11h22M2 17h16M24 17h4M2 23h26" stroke="#f3d27c" strokeWidth="3" strokeLinecap="round" /></Svg>
            <Temp>35°</Temp>
          </Weather>
          <StripIcon $gap={288}><WinLogo /></StripIcon>
          <SearchPill>
            <Svg w={24} stroke="#242424" strokeWidth="2.500"><circle cx="10.500" cy="10" r="8.500" /><path d="M16.500 16.500l6 7" strokeWidth="3" /></Svg>
            <span>Search</span>
            <SearchArt />
          </SearchPill>
          <Apps>
            {apps.map(([icon, o = {}], i) => (
              <AppSlot key={i}>
                <Tile $s={o.s || 54} $bg={o.bg} $edge={o.edge}>{icon}</Tile>
                {o.run && <Running $c={o.run} $w={o.w} />}
              </AppSlot>
            ))}
          </Apps>
          <Tray>
            <Svg w={17} h={10} stroke="#1b1b1b" strokeWidth="2"><path d="M1 9l7.500-7.500L16 9" /></Svg>
            <StripIcon $gap={27}>
              <Svg w={25} h={22}><path d="M6 17C-.5 17-1 9.500 4.500 8.500 6 1 15 .5 17.500 6c5-.5 6.500 3 6 6l-1 5z" fill="#b9b9b9" stroke="#222" strokeWidth="1.500" /><path d="M5 8.500C7 2 15 1 17.500 6c3 0 5 1.500 5.500 4-4-3-8-1-11 1.500C10 9.500 8 8.300 5 8.500z" fill="#7d7d7d" /><circle cx="18" cy="15" r="6.500" fill="#fff" /><path d="M13.800 14a4.400 4.400 0 017.800-1.500M22.200 16a4.400 4.400 0 01-7.800 1.500" stroke="#1273cf" strokeWidth="1.600" /><path d="M22.500 10.500v3h-3zM13.500 19.500v-3h3z" fill="#1273cf" /></Svg>
            </StripIcon>
            <TrayText $align="center" $w={40} $gap={24}>ENG<br />IN</TrayText>
            <StripIcon $gap={25}>
              <Svg w={24} h={18} strokeWidth="2"><path d="M1 7a16 16 0 0122 0" stroke="#bfb2a7" /><path d="M4.500 9.500a11 11 0 0115 0M8 13a6 6 0 018 0" stroke="#1b1b1b" /><circle cx="12" cy="15.500" r="2.200" fill="#1b1b1b" /></Svg>
            </StripIcon>
            <StripIcon $gap={12}>
              <Svg w={24} h={20} stroke="#1b1b1b" strokeWidth="1.800"><path d="M1 7h3.500L10 2v16l-5.500-5H1z" strokeLinejoin="round" /><path d="M13 7a5 5 0 010 6M16 4.500a8.500 8.500 0 010 11" /><path d="M19 1.500a13 13 0 010 17" stroke="#bfb2a7" /></Svg>
            </StripIcon>
            <StripIcon $gap={12}>
              <Svg w={24} h={16}><rect x="1" y="1" width="19.500" height="14" rx="3" stroke="#1b1b1b" strokeWidth="1.800" /><rect x="3.500" y="3.500" width="10" height="9" rx="1" fill="#1b1b1b" /><path d="M22 5v6" stroke="#1b1b1b" strokeWidth="3" /></Svg>
            </StripIcon>
            <TrayText $align="right" $w={97} $gap={21} $track={0.1}>14:24<br />04-04-2025</TrayText>
          </Tray>
        </Taskbar>
      </Screen>
    </>
  );
}
